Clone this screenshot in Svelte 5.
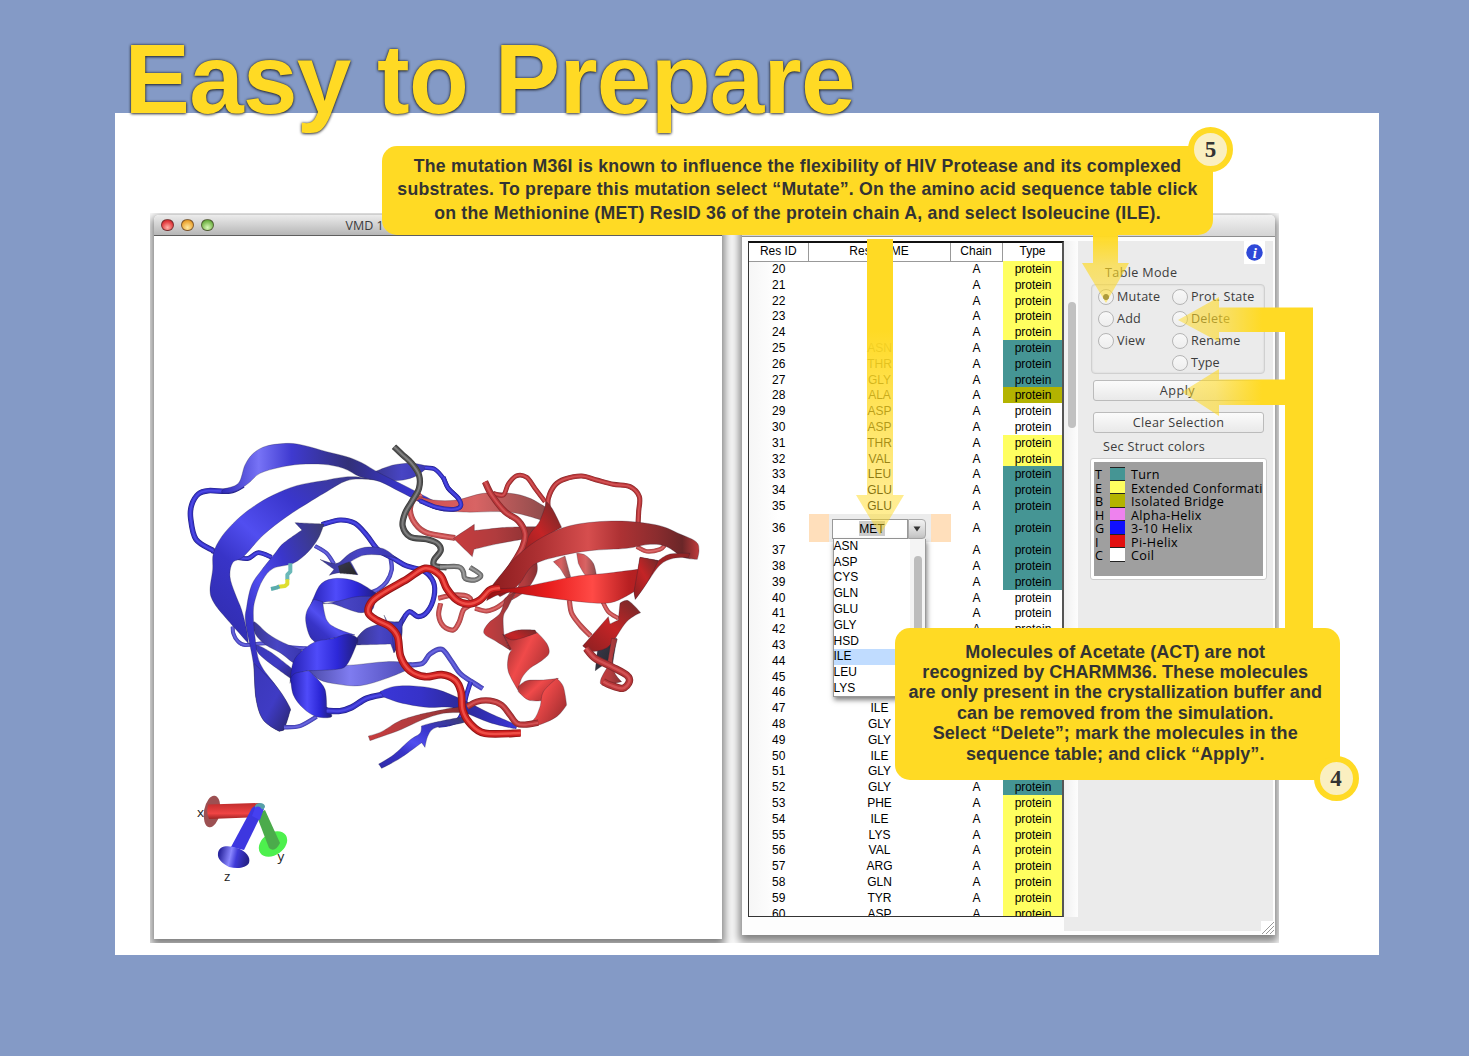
<script>
  const yellow = 'strand', teal = 'turn', olive = 'bridge', none = 'coil';
  const names = '- - - - - ASN THR GLY ALA ASP ASP THR VAL LEU GLU GLU MET - - - - - - - - - - ILE GLY GLY ILE GLY GLY PHE ILE LYS VAL ARG GLN TYR ASP'.split(' ');
  function structure(id) {
    if (id === 28) return olive;
    if ((id >= 25 && id <= 27) || (id >= 33 && id <= 39) || (id >= 49 && id <= 52)) return teal;
    if ((id >= 29 && id <= 30) || (id >= 40 && id <= 42)) return none;
    return yellow;
  }
  const rows = names.map((name, i) => {
    const id = 20 + i;
    const covered = id > 42 && id < 52;
    return { id, name: name === '-' ? '' : name, chain: covered ? '' : 'A', type: covered ? '' : 'protein', kind: structure(id) };
  });
  const options = ['ASN', 'ASP', 'CYS', 'GLN', 'GLU', 'GLY', 'HSD', 'ILE', 'LEU', 'LYS'];
  const legend = [
    ['T', 'turn', 'Turn'], ['E', 'strand', 'Extended Conformati'], ['B', 'bridge', 'Isolated Bridge'],
    ['H', 'alpha', 'Alpha-Helix'], ['G', 'helix310', '3-10 Helix'], ['I', 'pi', 'Pi-Helix'], ['C', 'coil', 'Coil']
  ];
  const modesLeft = ['Mutate', 'Add', 'View'];
  const modesRight = ['Prot. State', 'Delete', 'Rename', 'Type'];

  // Catmull-Rom spline through a list of "x,y" pairs; "!" marks a sharp corner.
  function spline(text, closed) {
    const pts = text.trim().split(/\s+/).map((p) => {
      const [x, y] = p.replace('!', '').split(',').map(Number);
      return { x, y, sharp: p.endsWith('!') };
    });
    const n = pts.length;
    const at = (i) => (closed ? pts[(i + n) % n] : pts[Math.max(0, Math.min(n - 1, i))]);
    let d = `M${pts[0].x},${pts[0].y}`;
    for (let i = 0; i < (closed ? n : n - 1); i++) {
      const a = at(i - 1), b = at(i), c = at(i + 1), e = at(i + 2);
      const b1 = b.sharp ? b : { x: b.x + (c.x - a.x) / 6, y: b.y + (c.y - a.y) / 6 };
      const c1 = c.sharp ? c : { x: c.x - (e.x - b.x) / 6, y: c.y - (e.y - b.y) / 6 };
      d += `C${b1.x},${b1.y} ${c1.x},${c1.y} ${c.x},${c.y}`;
    }
    return closed ? d + 'Z' : d;
  }
  const tones = {
    blue: ['#25238c', '#3834cc', '#4c48e4'], paleBlue: ['#4644a8', '#504dcc', '#6a67de'],
    red: ['#8a2a2c', '#b93639', '#d25254'], hot: ['#8e1616', '#cf2020', '#ee4e46'],
    paleRed: ['#a04a4a', '#c84c4e', '#dc6e6e'], gray: ['#3c3c3c', '#525252', '#808080'], paleGray: ['#5c5c5c', '#7a7a7a', '#9d9d9d']
  };
  const tube = (tone, w, pts) => ({ tube: true, d: spline(pts, false), w: w * 1.1, c: tones[tone] });
  const face = (fill, pts) => ({ tube: false, d: spline(pts, true), fill: `url(#${fill})` });

  const molecule = [
    // blue monomer
    tube('paleBlue', 11, '158,590 160,610 172,632 195,645 260,640 330,652 380,655'),
    face('bMid', '222,575 265,612 310,638 365,660! 355,705 300,668 258,645 226,612'),
    face('bDark', '226,645 270,665 335,715! 345,755! 290,715 240,675'),
    tube('blue', 13, '95,362 130,375 170,382 205,385 235,368 275,382'),
    tube('blue', 15, '190,165 150,183 85,182 55,192 35,225 32,265 48,328 100,362'),
    face('bMid', '585,125! 640,105 700,100 745,110! 710,137 670,150 630,152!'),
    tube('blue', 12, '735,113 765,118 790,145 805,175 835,205 842,228 820,238 770,232 700,200'),
    face('bBand', '640,157! 520,140 430,152 350,167 280,195 220,230 170,270 125,320 100,370 98,420 90,480 100,515 130,555 205,640! 200,600 185,540 165,490 150,440 158,398 190,380 250,315 320,260 390,215 440,185 500,152 560,148'),
    face('bTop', '130,178 175,160 195,105 220,70 260,48 325,40 375,47 440,65 500,80 545,98 600,130 680,170 780,222! 780,238! 720,215 660,185 600,155 540,140 490,115 430,103 360,103 300,112 240,130 205,160 170,182 130,190'),
    tube('paleBlue', 11, '405,348 440,370 462,402'),
    tube('paleBlue', 12, '632,385 635,420 620,455 595,478 560,492'),
    tube('blue', 14, '425,284 480,270 525,280 560,315 595,360 640,385 680,408 730,422 760,455 762,500 742,545 715,560 688,545 668,570 655,595'),
    face('bMid', '420,388! 470,400 510,370 555,352 610,356 650,385! 600,375 550,376 512,395! 534,434! 480,428 448,436! 462,418!'),
    face('dark', '475,408! 508,395! 518,412! 532,434! 480,430!'),
    face('bBand', '345,278! 432,282! 415,325 385,365 340,400 280,415 248,450 228,500 220,545 225,620 240,700 290,770 328,830 328,850 312,900! 298,904! 250,870 228,805 220,700 197,580 200,530 215,465 245,420 285,370 310,340 366,300!'),
    face('bDark', '222,700! 290,770 328,830 328,850 312,900! 298,904! 250,870 228,805'),
    tube('paleBlue', 12, '312,892 360,888 410,860'),
    face('bMid', '530,625! 560,595 620,578 665,575! 665,620 642,668! 632,642! 530,645!'),
    face('bDark', '612,555! 618,572! 655,578! 670,560! 660,640! 642,668! 635,600!'),
    face('bPale', '385,722! 450,708 520,705 620,695 695,698! 695,714! 620,745 540,767 470,762 420,750'),
    tube('paleBlue', 14, '690,705 728,700 750,672 785,658 812,690 840,730 875,755 908,776'),
    tube('blue', 13, '872,756 858,800 850,840 835,870 805,882 775,886'),
    face('bHelix', '385,545! 400,505 425,460 470,445 530,455 592,492! 575,545! 540,545 490,520 440,515 410,530! 398,550!'),
    face('bMid', '398,510! 430,520 480,512 530,500 590,500! 580,535! 545,548 510,540 460,522 425,522!'),
    face('bBand', '402,508! 380,545 378,580 390,620 410,640! 460,625 525,615! 470,595 440,570 428,515!'),
    face('bHelix', '500,613 532,625 525,655 500,705 470,718 385,722! 345,735 330,760! 334,720 345,685 375,655 410,634 460,625'),
    face('bHelix', '332,745! 345,730 387,722! 410,745 435,778 440,830! 455,860 410,860 370,835 340,795'),
    tube('blue', 17, '440,842 480,843 515,832 560,805 612,793'),
    face('bRibbon', '600,785! 640,770 700,768 770,778 850,810 930,850 1012,885! 1008,897! 930,878 860,850 810,832 740,832 660,818 610,800!'),
    face('bBand', '596,1002! 640,975 690,930 720,910 724,888! 760,878 850,862 850,878 770,892 745,915 735,952! 725,938! 660,985 605,1015!'),

    // red monomer
    tube('paleRed', 16, '725,195 700,210 690,240 705,280 740,308 825,324'),
    face('rPale', '705,195! 760,210 830,210 910,190 990,190 1050,205 1110,240! 1090,272! 1020,252 960,245 850,246 770,235'),
    tube('blue', 13, '790,142 805,175 835,205 842,228 820,238 770,232 720,212'),
    face('rMid', '820,325! 883,283! 883,302! 980,292 1075,290! 1072,320! 960,340 882,358! 877,380!'),
    tube('red', 13, '940,190 970,195 985,162 1010,137 1040,142 1065,175 1095,215'),
    tube('red', 14, '1105,240 1105,205 1125,165 1155,147 1205,138 1250,150 1300,163 1350,170 1378,200 1376,245 1374,285'),
    tube('paleRed', 12, '1370,350 1400,364 1440,358 1455,345'),
    face('rDark', '1100,215! 1118,238 1145,292! 1100,320 1060,360 1020,400! 1045,320 1078,275'),
    face('rPale', '1120,395! 1155,378! 1172,440! 1165,455! 1140,415!'),
    face('rPale', '1190,370! 1215,375 1240,400 1250,440! 1220,440 1195,400!'),
    face('rMid', '1010,480! 1040,420 1070,395! 1070,430 1040,480 995,510!'),
    tube('paleRed', 14, '1168,510 1175,550 1200,585 1232,618'),
    tube('paleRed', 12, '1268,515 1285,545 1315,565'),
    tube('red', 18, '915,155 935,195 975,245 1015,272 1035,310 1028,350 1000,400 960,455'),
    tube('paleRed', 14, '775,505 820,495 865,500 872,522 850,540 838,575 820,600 790,588 776,555 782,520'),
    tube('paleRed', 13, '885,535 920,543 955,530 985,505 1010,470'),
    face('rMid', '975,505! 1010,480! 985,530 970,560 972,615! 990,660! 950,635 912,610 925,580 960,550'),
    face('rDark', '972,615! 1015,600 1065,600! 1078,620! 1020,640 990,662!'),
    face('rHelix', '968,612! 1000,630 1072,608! 1100,640 1107,670 1085,692 1050,715 1025,745 1015,782! 985,725 985,680 995,660!'),
    face('rHelix', '1015,770! 1040,752 1090,750 1135,745! 1100,790 1085,812! 1045,810 1015,785!'),
    face('rHelix', '1130,745! 1150,770 1160,825! 1130,860 1075,885 1020,890! 1060,870 1080,830 1090,785'),
    tube('red', 17, '862,830 890,815 930,812 965,825 990,855 1010,880 1035,884 1075,878'),
    face('rMid', '565,918! 605,905 660,872 725,852! 810,835 850,830! 850,848! 790,850 725,870 665,898 610,918 570,932!'),
    face('rBand', '930,475! 970,425 1020,370 1090,320 1180,285 1310,273 1430,285 1500,312 1548,335 1557,360 1552,388! 1510,382 1460,350 1410,343 1340,355 1230,362 1140,378 1060,405 1015,465 960,500!'),
    face('rHot', '930,475! 1020,472 1180,440 1280,430 1374,418! 1380,382! 1435,392! 1470,372 1530,370! 1525,383! 1480,385 1440,405 1400,460 1366,508! 1362,485! 1300,516 1230,518 1080,500 980,488 920,512!'),
    face('rDark', '1374,418! 1380,382! 1435,392! 1400,460 1366,508! 1362,485!'),
    face('dark', '1255,640! 1290,630! 1310,625! 1295,720! 1270,705! 1246,722!'),
    face('rDark', '1320,520! 1345,512 1382,548! 1340,575 1285,650 1230,665! 1208,648! 1285,560! 1290,582! 1315,570!'),
    face('rMid', '1295,625! 1312,628! 1298,690 1305,730 1325,755! 1270,765 1262,750 1280,715!'),
    tube('red', 20, '1218,655 1245,685 1295,710 1340,735 1348,755 1328,775 1290,765 1270,755'),

    tube('gray', 17, '642,50 665,72 695,100 717,135 717,175 695,215 675,250 668,288 690,320 740,328 772,340 782,362 762,390 765,408 800,412'),
    tube('paleGray', 14, '780,411 835,410 850,425 855,445 885,450 902,435 870,412'),
    tube('hot', 21, '960,474 930,480 900,510 865,522 830,510 800,475 780,435 735,415 680,448 610,488 575,515 565,548 590,570 630,590 653,620 662,680 690,722 735,740 785,734 825,750 843,785 848,840 870,880 915,910 1022,909')
  ];
</script>

{#snippet trafficLights()}
  <div class="lights"><i class="close"></i><i class="minimise"></i><i class="expand"></i></div>
{/snippet}

<main class="slide">
  <section class="sheet"></section>
  <h1>Easy to Prepare</h1>

  <div class="desktop">
    <section class="window viewer">
      <header>{@render trafficLights()}<span>VMD 1</span></header>
      <svg class="scene" viewBox="154 236 568 703">
        <defs>
          <linearGradient id="bTop" x1="0" x2="1"><stop offset="0" stop-color="#2d29b8" /><stop offset=".17" stop-color="#7773f6" /><stop offset=".32" stop-color="#3f3ad0" /><stop offset=".58" stop-color="#323078" /><stop offset=".8" stop-color="#3734c4" /><stop offset="1" stop-color="#3a36d8" /></linearGradient>
          <linearGradient id="bRibbon" x1="0" x2="1"><stop offset="0" stop-color="#3a36d8" /><stop offset=".3" stop-color="#3632c8" /><stop offset=".6" stop-color="#2c2998" /><stop offset="1" stop-color="#3a36d8" /></linearGradient>
          <linearGradient id="bBand" x1="0" y1="1" x2="1" y2="0"><stop offset="0" stop-color="#2f2ba8" /><stop offset=".3" stop-color="#3834c8" /><stop offset=".45" stop-color="#514ef0" /><stop offset=".65" stop-color="#3a36cc" /><stop offset="1" stop-color="#3c3c70" /></linearGradient>
          <linearGradient id="bMid" x1="0" x2="1"><stop offset="0" stop-color="#3a3792" /><stop offset=".5" stop-color="#4845c4" /><stop offset="1" stop-color="#3a37b0" /></linearGradient>
          <linearGradient id="bDark" x1="0" y1="0" x2="1" y2="1"><stop offset="0" stop-color="#3a37b8" /><stop offset=".55" stop-color="#3f3bc4" /><stop offset="1" stop-color="#29266e" /></linearGradient>
          <linearGradient id="bPale" x1="0" x2="1"><stop offset="0" stop-color="#4b49a8" /><stop offset=".4" stop-color="#7f7cf0" /><stop offset="1" stop-color="#4a47b4" /></linearGradient>
          <linearGradient id="bHelix" x1="0" x2="1"><stop offset="0" stop-color="#241fb0" /><stop offset=".4" stop-color="#4f4bfa" /><stop offset=".7" stop-color="#2d28d8" /><stop offset="1" stop-color="#221f78" /></linearGradient>
          <linearGradient id="rPale" x1="0" x2="1"><stop offset="0" stop-color="#d04c4e" /><stop offset=".45" stop-color="#d86464" /><stop offset="1" stop-color="#8a4a4a" /></linearGradient>
          <linearGradient id="rMid" x1="0" x2="1"><stop offset="0" stop-color="#c83c3e" /><stop offset=".5" stop-color="#b03c3e" /><stop offset="1" stop-color="#873032" /></linearGradient>
          <linearGradient id="rDark" x1="0" y1="1" x2="1" y2="0"><stop offset="0" stop-color="#8a2022" /><stop offset=".5" stop-color="#c42426" /><stop offset="1" stop-color="#6c2a2a" /></linearGradient>
          <linearGradient id="rHelix" x1="0" x2="1" y2=".6"><stop offset="0" stop-color="#8e2a2c" /><stop offset=".5" stop-color="#f04a4a" /><stop offset="1" stop-color="#a83032" /></linearGradient>
          <linearGradient id="rBand" x1="0" x2="1"><stop offset="0" stop-color="#8c1c1e" /><stop offset=".25" stop-color="#b03234" /><stop offset=".47" stop-color="#d64e4e" /><stop offset=".62" stop-color="#ae3234" /><stop offset=".8" stop-color="#8a2c2e" /><stop offset=".92" stop-color="#6a2628" /><stop offset="1" stop-color="#c03c3c" /></linearGradient>
          <linearGradient id="rHot" x1="0" x2="1"><stop offset="0" stop-color="#941214" /><stop offset=".3" stop-color="#e81c1c" /><stop offset=".52" stop-color="#ff4a46" /><stop offset=".7" stop-color="#b82022" /><stop offset="1" stop-color="#8c2426" /></linearGradient>
          <linearGradient id="dark" x1="0" x2="1" y2="1"><stop offset="0" stop-color="#3a3a50" /><stop offset="1" stop-color="#262626" /></linearGradient>
          <linearGradient id="axisX" x2="0" y2="1"><stop offset="0" stop-color="#c02c2c" /><stop offset=".65" stop-color="#f04444" /><stop offset="1" stop-color="#a02424" /></linearGradient>
          <linearGradient id="cone" x2="1" y2=".15"><stop offset=".1" stop-color="#2b27a0" /><stop offset=".45" stop-color="#8a87ff" /><stop offset=".65" stop-color="#3f3ad8" /><stop offset="1" stop-color="#27238c" /></linearGradient>
        </defs>
        <g transform="translate(180 430) scale(.33333)" stroke-linejoin="round" stroke-linecap="butt">
          {#each molecule as part}
            {#if part.tube}
              <g fill="none">
                <path d={part.d} stroke={part.c[0]} stroke-width={part.w} />
                <path d={part.d} stroke={part.c[1]} stroke-width={part.w * 0.75} />
                <path d={part.d} stroke={part.c[2]} stroke-width={part.w * 0.32} />
              </g>
            {:else}
              <path d={part.d} fill={part.fill} stroke="#202030" stroke-opacity=".4" stroke-width="2" />
            {/if}
          {/each}
          <g fill="none" stroke-width="12">
            <path d="M331 400V425L322 434V450" stroke="#6ab8b8" />
            <path d="M322 448V462L315 468L296 470" stroke="#dede30" />
            <path d="M298 469L290 473L273 477" stroke="#5aacac" />
          </g>
        </g>
        <g class="axes">
          <ellipse cx="273" cy="844" rx="15.5" ry="11" fill="#4df04d" transform="rotate(-35 273 844)" />
          <path d="M256 814L269 848Q275 853 280 843L265 810Z" fill="#4bab4b" />
          <ellipse cx="212" cy="811.500" rx="8" ry="16" fill="#9c5052" transform="rotate(10 212 811.5)" />
          <path d="M208 804.500L260 803V817L209 819Q206 812 208 804.500Z" fill="url(#axisX)" />
          <path d="M252 808Q258 802 264 809L244 850L231 847Z" fill="#3d37e0" />
          <ellipse cx="260" cy="806.500" rx="5" ry="3.500" fill="#57a0a8" />
          <path d="M255 808Q259 804 263 811L260 820L252 816Z" fill="#4640f0" />
          <path d="M218 853C219 845 229 845 237 848C246 851 251 857 249 863C246 868 238 869 229 867C222 863 217 859 218 853Z" fill="url(#cone)" />
          <text x="197" y="817">x</text><text x="277.500" y="861">y</text><text x="224" y="881">z</text>
        </g>
      </svg>
    </section>

    <section class="window editor">
      <header></header>
      <div class="body">
        <div class="grid">
          <div class="row head"><span>Res ID</span><span>Res NAME</span><span>Chain</span><span>Type</span></div>
          {#each rows as r}
            <div class="row" class:selected={r.id === 36}>
              <span>{r.id}</span>
              {#if r.id === 36}
                <span class="editing">
                  <span class="combo"><b><em>{r.name}</em></b><i><svg viewBox="0 0 8 6"><path d="M.5 .5H7.500L4 5.500Z" /></svg></i>
                    <span class="menu">
                      <span class="items">{#each options as o}<span class:current={o === 'ILE'}>{o}</span>{/each}</span>
                      <span class="rail"><i></i></span>
                    </span>
                  </span>
                </span>
              {:else}<span>{r.name}</span>{/if}
              <span>{r.chain}</span><span class={r.kind}>{r.type}</span>
            </div>
          {/each}
        </div>
        <div class="scroll"><i></i></div>
        <aside>
          <div class="info"><svg viewBox="0 0 21 23"><circle cx="10.500" cy="11.500" r="8.200" fill="#2f49d8" /><text x="10.800" y="16.500" text-anchor="middle">i</text></svg></div>
          <h2>Table Mode</h2>
          <div class="modes">
            <div>{#each modesLeft as m}<label><i class:on={m === 'Mutate'}></i>{m}</label>{/each}</div>
            <div>{#each modesRight as m}<label><i></i>{m}</label>{/each}</div>
          </div>
          <button class="apply">Apply</button>
          <button class="clear">Clear Selection</button>
          <h3>Sec Struct colors</h3>
          <div class="legend">
            <div>{#each legend as [code, kind, label]}<p><b>{code}</b><i class={kind}></i><span>{label}</span></p>{/each}</div>
          </div>
        </aside>
        <svg class="grip" viewBox="0 0 14 14"><path d="M1 13L13 1M5 13L13 5M9 13L13 9" /></svg>
      </div>
    </section>
  </div>

  <svg class="arrows" viewBox="0 0 1469 1056">
    <defs>
      <linearGradient id="down" gradientUnits="userSpaceOnUse" x1="0" y1="330" x2="0" y2="500"><stop offset="0" stop-color="#ffda24" /><stop offset=".5" stop-color="#ffda24" stop-opacity=".72" /><stop offset="1" stop-color="#ffda24" stop-opacity=".5" /></linearGradient>
      <linearGradient id="mutate" gradientUnits="userSpaceOnUse" x1="0" y1="235" x2="0" y2="303"><stop offset="0" stop-color="#ffda24" /><stop offset=".45" stop-color="#ffda24" stop-opacity=".65" /><stop offset="1" stop-color="#ffda24" stop-opacity=".5" /></linearGradient>
      <linearGradient id="left" gradientUnits="userSpaceOnUse" x1="1178" y1="0" x2="1262" y2="0"><stop offset="0" stop-color="#ffda24" stop-opacity=".5" /><stop offset=".45" stop-color="#ffda24" stop-opacity=".6" /><stop offset="1" stop-color="#ffda24" /></linearGradient>
    </defs>
    <path fill="url(#down)" d="M867 239H893V495H904L880 535L856 495H867Z" />
    <path fill="url(#mutate)" d="M1093 234H1118V263H1129L1106 303L1082 263H1093Z" />
    <path fill="url(#left)" d="M1313 640V307.500H1219V297L1178 320L1219 342V332H1285V379.500H1219V369L1182 392L1219 416V405H1285V640Z" />
  </svg>

  <div class="callout five">
    <p>The mutation M36I is known to influence the flexibility of HIV Protease and its complexed</p>
    <p>substrates. To prepare this mutation select “Mutate”. On the amino acid sequence table click</p>
    <p>on the Methionine (MET) ResID 36 of the protein chain A, and select Isoleucine (ILE).</p>
    <strong>5</strong>
  </div>
  <div class="callout four">
    <p>Molecules of Acetate (ACT) are not</p>
    <p>recognized by CHARMM36. These molecules</p>
    <p>are only present in the crystallization buffer and</p>
    <p>can be removed from the simulation.</p>
    <p>Select “Delete”; mark the molecules in the</p>
    <p>sequence table; and click “Apply”.</p>
    <strong>4</strong>
  </div>
</main>

<style>
  :global(body) { background: #849ac6; overflow: hidden; }
  .slide { position: relative; box-sizing: border-box; width: 1469px; height: 1056px; padding: 113px 0 0 115.400px; overflow: hidden; background: #849ac6; font-family: "Liberation Sans", Arial, sans-serif; }
  .slide * { box-sizing: border-box; }
  i, em { font-style: normal; }
  p { margin: 0; }
  .sheet { width: 1264px; height: 842px; background: #fff; }
  h1 { position: absolute; left: 124.500px; top: 22.500px; margin: 0; font-size: 98px; line-height: 113px; font-weight: 700; letter-spacing: -.7px; color: #ffda24; white-space: nowrap; text-shadow: 0 1px 3px rgba(0, 0, 0, .6), 0 0 3px rgba(0, 0, 0, .7); }

  .desktop { position: absolute; z-index: 0; isolation: isolate; left: 150px; top: 213px; width: 1129px; height: 730px; overflow: hidden; }
  .window { position: absolute; display: flex; flex-direction: column; background: #fff; border-radius: 5px 5px 0 0; box-shadow: 0 4px 10px 3px rgba(0, 0, 0, .5); }
  .window header { position: relative; flex: none; height: 21px; border-radius: 5px 5px 0 0; background: linear-gradient(#ececec, #b6b6b6); border-bottom: 1px solid #5e5e5e; }
  .viewer { left: 4px; top: 2px; width: 568px; height: 724px; }
  .viewer header { display: flex; align-items: center; font: 12.500px "Open Sans", sans-serif; color: #3c3c3c; }
  .viewer header span { margin-left: 132px; white-space: nowrap; }
  .lights { display: flex; gap: 7.500px; margin-left: 7px; }
  .lights i { width: 12.500px; height: 12.500px; border-radius: 50%; border: 1px solid rgba(60, 40, 40, .6); }
  .lights .close { background: radial-gradient(circle at 50% 75%, #ffb0a8, #e23a3e 65%, #a11c20); }
  .lights .minimise { background: radial-gradient(circle at 50% 75%, #ffe9a0, #eda838 65%, #b06e10); }
  .lights .expand { background: radial-gradient(circle at 50% 75%, #d8f8b8, #78b84e 65%, #3f7d22); }
  .scene { display: block; width: 568px; height: 703px; }
  .axes text { font: 13.500px "Open Sans", sans-serif; fill: #222; }

  .editor { left: 592px; top: 2px; width: 533px; height: 720px; }
  .editor header { height: 22px; border-bottom-color: #8e8e8e; background: linear-gradient(#f2f2f2, #d4d4d4); }
  .body { position: relative; flex: 1; display: flex; padding: 4px 2px 4px 6px; min-height: 0; background: linear-gradient(#ebebeb, #ebebeb) 322px 680px / 209px 14px no-repeat #fdfdfd; }
  .grid { width: 316px; height: 676px; overflow: hidden; border: 1px solid #333; border-top: 2px solid #111; border-right: 2px solid #555; background: linear-gradient(90deg, #f6f6f6, #fff 30px); font-size: 12px; color: #000; }
  .row { display: grid; grid-template-columns: 59.500px 142px 52px 61px; height: 15.810px; line-height: 16px; text-align: center; }
  .row > span { display: block; }
  .head { height: 18px; line-height: 17.500px; }
  .head span { border-right: 1px solid #999; border-bottom: 1px solid #999; background: #fff; }
  .selected { height: 28.500px; line-height: 28.500px; }
  .strand { background: #ffff60; }
  .turn { background: #459594; }
  .bridge { background: #b3b300; }
  .alpha { background: #ee82ee; }
  .helix310 { background: #1010ff; }
  .pi { background: #e21010; }
  .coil { background: #fff; }
  .row .editing { display: flex; justify-content: center; background: #ffdfbb; }
  .combo { position: relative; display: flex; width: 102px; height: 28px; padding: 5px 5px 3px 3px; background: #ececec; line-height: 18px; }
  .combo b { flex: 1; font-weight: 400; background: #fff; border: 1px solid #999; padding-left: 5px; }
  .combo b em { display: inline-block; height: 15px; line-height: 16px; background: #ccc; margin-top: 1px; }
  .combo > i { width: 18px; background: linear-gradient(#f2f2f2, #c4c4c4); border: 1px solid #aaa; border-radius: 0 4px 4px 0; display: grid; place-items: center; }
  .combo > i svg { width: 8px; height: 6px; fill: #333; }
  .menu { position: absolute; z-index: 2; left: 4px; top: 25px; display: flex; width: 93px; height: 158px; background: #fff; border: 1px solid #999; border-top: 0; box-shadow: 1px 3px 5px rgba(0, 0, 0, .5); }
  .items { flex: 1; display: flex; flex-direction: column; text-align: left; }
  .items span { height: 15.810px; line-height: 15.800px; }
  .items .current { background: #c0dcff; }
  .rail { width: 15px; background: #f4f4f4; padding: 17px 3px 0 4px; }
  .rail i { display: block; height: 100px; background: #bdbdbd; border-radius: 4px; }
  .scroll { width: 14px; height: 676px; padding: 61px 1px 0 4px; background: linear-gradient(90deg, #f0f0f0, #fdfdfd); }
  .scroll i { display: block; width: 8px; height: 126px; border-radius: 4px; background: #c1c1c1; }
  aside { flex: 1; display: flex; flex-direction: column; background: #ebebeb; font: 12.600px "Open Sans", sans-serif; color: #3c3c3c; }
  .info { align-self: flex-end; width: 21px; height: 23px; margin-right: 8px; background: #fff; }
  .info svg { display: block; }
  .info text { font: italic 700 15px "Liberation Serif", serif; fill: #fff; }
  h2, h3 { margin: 0; font-size: 12.600px; font-weight: 400; }
  h2 { height: 20px; line-height: 17px; padding-left: 27px; letter-spacing: .35px; }
  .modes { display: flex; width: 174px; height: 90px; margin-left: 13px; padding: 1px 6px; border: 1px solid #d0d0d0; border-radius: 4px; box-shadow: inset 0 0 2px #ccc; }
  .modes > div:first-child { width: 74px; }
  .modes label { display: flex; align-items: center; height: 21.900px; gap: 3px; white-space: nowrap; letter-spacing: .2px; }
  .modes i { width: 16px; height: 16px; border: 1px solid #b5b5b5; border-radius: 50%; background: linear-gradient(#f8f8f8, #eee); }
  .modes i.on { background: radial-gradient(circle, #555 0 2.500px, #f2f2f2 3.500px); }
  button { width: 171px; height: 21px; margin: 6px 0 0 15px; padding: 0; border: 1px solid #bbb; border-radius: 3px; background: linear-gradient(#fbfbfb, #e9e9e9); color: #3c3c3c; font: inherit; line-height: 18px; letter-spacing: .3px; }
  .apply { padding-right: 2px; letter-spacing: .5px; }
  .clear { margin-top: 11px; }
  h3 { height: 25px; line-height: 27px; padding-left: 25px; letter-spacing: .3px; }
  .legend { width: 177px; height: 122px; margin-left: 12px; padding: 3px; border: 1px solid #ccc; border-radius: 3px; background: #fff; }
  .legend > div { height: 114px; padding: 5px 0 0 1px; background: #9f9f9f; overflow: hidden; color: #000; line-height: 13px; }
  .legend p { display: flex; align-items: center; height: 13.500px; white-space: nowrap; }
  .legend b { width: 15px; font-weight: 400; padding-top: 1.500px; }
  .legend i { width: 15px; height: 13.500px; border-bottom: 1px solid #222; }
  .legend p:first-child i { border-top: 1px solid #222; }
  .legend span { margin-left: 6px; padding-top: 1.500px; letter-spacing: .35px; }
  .grip { position: absolute; right: 0; bottom: 0; width: 14px; height: 14px; background: #fff; stroke: #999; fill: none; }

  .arrows { position: absolute; z-index: 1; inset: 0; width: 1469px; height: 1056px; }
  .callout { position: absolute; z-index: 2; background: #ffda24; color: #333; font-weight: 700; text-align: center; white-space: nowrap; border-radius: 15px; display: flex; flex-direction: column; align-items: center; }
  .five { left: 382px; top: 146px; width: 831px; height: 89px; padding-top: 8.500px; font-size: 17.700px; line-height: 23.600px; letter-spacing: .22px; }
  .four { left: 895px; top: 628px; width: 444.500px; height: 152px; padding: 13.500px 4px 0 0; font-size: 18px; line-height: 20.400px; letter-spacing: .07px; }
  .callout strong { position: absolute; width: 45px; height: 45px; border: 6px solid #ffda24; border-radius: 50%; background: #faefc0; font: 700 23px/33px "Liberation Serif", serif; }
  .five strong { left: 806px; top: -19px; }
  .four strong { left: 418.500px; top: 128px; }
</style>
